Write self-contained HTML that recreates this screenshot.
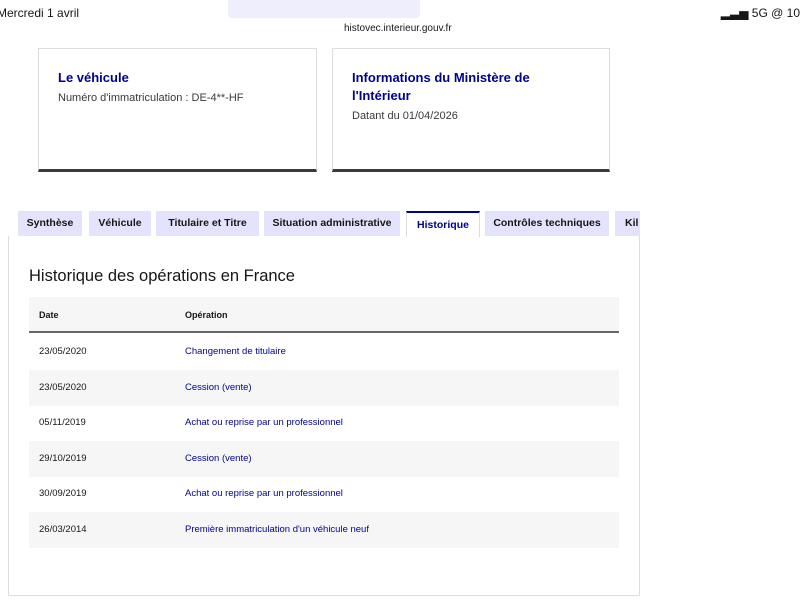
<!DOCTYPE html>
<html><head><meta charset="utf-8"><style>
*{margin:0;padding:0;box-sizing:border-box}
body{width:800px;height:600px;background:#fff;font-family:"Liberation Sans",sans-serif;position:relative;overflow:hidden;color:#161616}
.abs{position:absolute}
.card{position:absolute;top:48px;height:124px;border:1px solid #ddd;border-bottom:3px solid #3a3a3a;padding:20px 19px}
.card h3{color:#000091;font-size:13px;line-height:18px;font-weight:bold}
.card p{font-size:11px;color:#3a3a3a;margin-top:5px}
.tab{position:absolute;top:211px;height:25px;background:#e3e3fd;font-size:10.5px;font-weight:bold;line-height:25px;text-align:center;color:#161616}
.tab.on{background:#fff;color:#000091;border-top:2px solid #000091;border-left:1px solid #ddd;border-right:1px solid #ddd}
.row{position:absolute;left:29px;width:590px;height:36px;font-size:9.5px;line-height:36px}
.row span{position:absolute;left:10px}
.row a{position:absolute;left:156px;color:#000091;text-decoration:none}
.g{background:#f6f6f6}
</style></head><body>
<div class="abs" style="left:-3px;top:6px;font-size:12px">Mercredi 1 avril</div>
<div class="abs" style="left:228px;top:0;width:192px;height:18px;background:#eeeefc;border-radius:0 0 4px 4px"></div>
<div class="abs" style="right:0;top:6px;font-size:12px;white-space:nowrap">▂▃▅ 5G @ 10</div>
<div class="abs" style="left:344px;top:23px;font-size:10px">histovec.interieur.gouv.fr</div>
<div class="card" style="left:38px;width:279px"><h3>Le véhicule</h3><p>Numéro d'immatriculation : DE-4**-HF</p></div>
<div class="card" style="left:332px;width:278px"><h3>Informations du Ministère de l'Intérieur</h3><p>Datant du 01/04/2026</p></div>
<div class="abs" style="left:8px;top:236px;width:632px;height:360px;border:1px solid #ddd;border-top:none"></div>
<div class="tab" style="left:18px;width:64px">Synthèse</div>
<div class="tab" style="left:89px;width:62px">Véhicule</div>
<div class="tab" style="left:156px;width:103px">Titulaire et Titre</div>
<div class="tab" style="left:264px;width:136px">Situation administrative</div>
<div class="tab on" style="left:406px;width:74px;height:26px">Historique</div>
<div class="tab" style="left:485px;width:124px">Contrôles techniques</div>
<div class="tab" style="left:615px;width:25px;text-align:left;padding-left:10px;overflow:hidden">Kil</div>
<div class="abs" style="left:29px;top:267px;font-size:16.5px">Historique des opérations en France</div>
<div class="row g" style="top:297px;border-bottom:2px solid #666;font-weight:bold;font-size:9px"><span>Date</span><a style="color:#161616">Opération</a></div>
<div class="row" style="top:334px"><span>23/05/2020</span><a>Changement de titulaire</a></div>
<div class="row g" style="top:370px"><span>23/05/2020</span><a>Cession (vente)</a></div>
<div class="row" style="top:405px"><span>05/11/2019</span><a>Achat ou reprise par un professionnel</a></div>
<div class="row g" style="top:441px"><span>29/10/2019</span><a>Cession (vente)</a></div>
<div class="row" style="top:476px"><span>30/09/2019</span><a>Achat ou reprise par un professionnel</a></div>
<div class="row g" style="top:512px"><span>26/03/2014</span><a>Première immatriculation d'un véhicule neuf</a></div>
</body></html>
